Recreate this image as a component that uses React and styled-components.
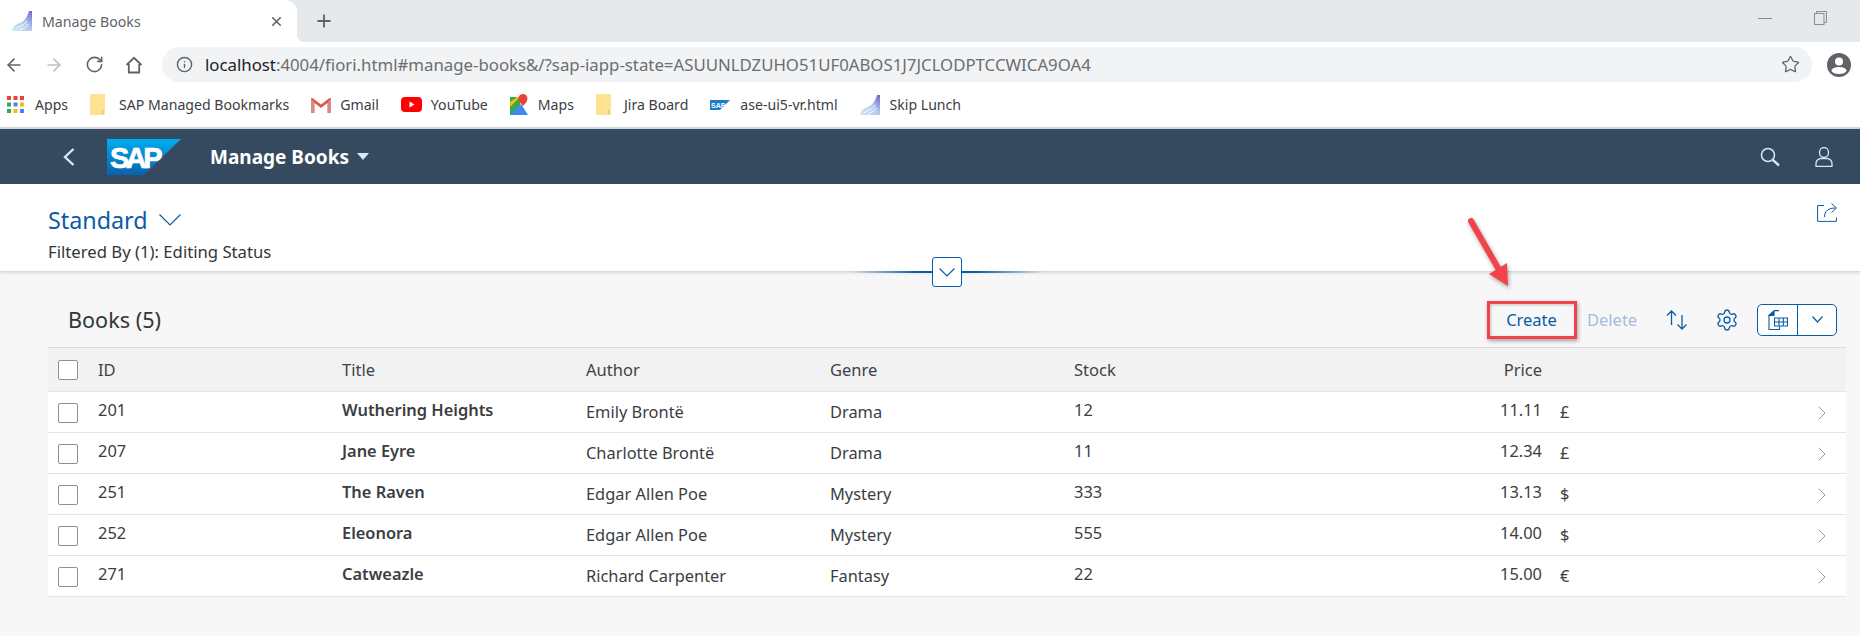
import React from "react";
import styled, { createGlobalStyle } from "styled-components";
import { Settings, ChevronRight, X, Plus, ArrowLeft, ArrowRight, RotateCw, Info, Star } from "lucide-react";

const Global = createGlobalStyle`
  html, body { margin: 0; padding: 0; background: #f7f7f7; }
  * { box-sizing: border-box; }
  body { font-family: "Noto Sans", "Open Sans", sans-serif; color: #32363a; }
`;

const Page = styled.div`
  position: relative;
  width: 1860px;
  height: 636px;
  overflow: hidden;
  background: #f7f7f7;
`;

/* ---------- browser chrome ---------- */
const TabStrip = styled.div`
  display: flex;
  align-items: center;
  height: 42px;
  background: #e6e9ec;
`;
const Tab = styled.div`
  position: relative;
  display: flex;
  align-items: center;
  width: 297px;
  height: 42px;
  padding: 0 13px 0 12px;
  background: #fff;
  border-top-right-radius: 12px;
  &::after {
    content: "";
    position: absolute;
    right: -8px;
    bottom: 0;
    width: 8px;
    height: 8px;
    background: radial-gradient(circle at 100% 0, transparent 8px, #fff 8.5px);
  }
`;
const TabTitle = styled.span`
  flex: 1;
  margin-left: 10px;
  font-size: 14.2px;
  color: #5f6368;
`;
const NewTab = styled.div`
  display: flex;
  margin-left: 17px;
  color: #5f6368;
`;
const WindowControls = styled.div`
  display: flex;
  align-items: center;
  gap: 42px;
  margin-left: auto;
  padding: 0 33px 6px 0;
`;
const Minimize = styled.div`
  width: 14px;
  height: 1px;
  background: #8a8d90;
`;
const Toolbar = styled.div`
  display: flex;
  align-items: center;
  height: 40px;
  padding: 5px 0 0 0;
  background: #fff;
`;
const NavButtons = styled.div`
  display: flex;
  align-items: center;
  gap: 12px;
  width: 162px;
  color: #5f6368;
`;
const NavCell = styled.div`
  display: flex;
  justify-content: center;
  width: 28px;
`;
const AddressBar = styled.div`
  display: flex;
  align-items: center;
  width: 1650px;
  height: 35px;
  padding: 0 12px 0 14px;
  border-radius: 18px;
  background: #f1f3f4;
`;
const Url = styled.div`
  flex: 1;
  margin-left: 12px;
  font-size: 16.8px;
  color: #6a6e72;
  white-space: nowrap;
`;
const Host = styled.span`
  color: #202124;
`;
const Avatar = styled.div`
  display: flex;
  margin-left: 15px;
`;
const Bookmarks = styled.div`
  display: flex;
  align-items: center;
  height: 45px;
  padding-left: 7px;
  background: #fff;
`;
const Bookmark = styled.div`
  display: flex;
  align-items: center;
  gap: ${(p) => p.$iconGap}px;
  margin-right: ${(p) => p.$gap}px;
  font-size: 14.1px;
  color: #3c4043;
  white-space: nowrap;
`;
const ChromeRule = styled.div`
  height: 2px;
  background: #d3d6d9;
`;

/* ---------- fiori shell ---------- */
const Shell = styled.header`
  display: flex;
  align-items: center;
  height: 55px;
  padding: 0 27px 0 63px;
  background: #354a5f;
  color: #fff;
`;
const BackButton = styled.div`
  display: flex;
  width: 44px;
  color: #d1e8ff;
`;
const ShellTitle = styled.div`
  display: flex;
  align-items: center;
  margin-left: 29px;
  font-size: 19px;
  font-weight: 700;
`;
const Caret = styled.span`
  width: 0;
  height: 0;
  margin-left: 8px;
  border-left: 6px solid transparent;
  border-right: 6px solid transparent;
  border-top: 7px solid #d1e8ff;
`;
const ShellIcons = styled.div`
  display: flex;
  align-items: center;
  gap: 35px;
  margin-left: auto;
  color: #d1e8ff;
`;

/* ---------- page header ---------- */
const PageHeader = styled.section`
  position: relative;
  display: flex;
  justify-content: space-between;
  height: 88px;
  padding: 21px 23px 0 48px;
  background: #fff;
  border-bottom: 1px solid #d9d9d9;
  box-shadow: 0 1px 3px rgba(0, 0, 0, 0.12);
`;
const VariantTitle = styled.div`
  display: flex;
  align-items: center;
  gap: 11px;
  height: 30px;
  font-size: 23.3px;
  color: #0a5ca8;
`;
const FilterText = styled.div`
  margin-top: 7px;
  font-size: 16.7px;
  line-height: 20px;
  color: #32363a;
`;
const ShareIcon = styled.div`
  display: flex;
  margin-top: -3px;
`;
const CollapseLine = styled.div`
  position: absolute;
  left: 850px;
  bottom: -2px;
  width: 194px;
  height: 2px;
  background: linear-gradient(90deg, rgba(10, 92, 168, 0), #0a5ca8 35%, #0a5ca8 65%, rgba(10, 92, 168, 0));
`;
const CollapseButton = styled.div`
  position: absolute;
  left: 932px;
  bottom: -16px;
  display: flex;
  align-items: center;
  justify-content: center;
  width: 30px;
  height: 30px;
  background: #fff;
  border: 1px solid #0a5ca8;
  border-radius: 3px;
  color: #0a5ca8;
`;

/* ---------- table ---------- */
const Content = styled.main`
  padding: 0 14px 0 48px;
`;
const TableToolbar = styled.div`
  display: flex;
  align-items: center;
  height: 75px;
  padding: 20px 9px 0 20px;
`;
const TableTitle = styled.h2`
  margin: 0;
  font-size: 21.6px;
  font-weight: 400;
  color: #32363a;
`;
const Actions = styled.div`
  display: flex;
  align-items: center;
  margin-left: auto;
`;
const TextAction = styled.div`
  width: ${(p) => p.$width}px;
  margin-right: ${(p) => p.$after}px;
  font-size: 16.5px;
  text-align: center;
  color: ${(p) => (p.$disabled ? "#a3bedb" : "#0a5ca8")};
`;
const IconAction = styled.div`
  display: flex;
  justify-content: center;
  width: 24px;
  margin-right: ${(p) => p.$after}px;
  color: #0a5ca8;
`;
const Split = styled.div`
  display: flex;
  width: 80px;
  height: 32px;
  background: #fff;
  border: 1px solid #0a5ca8;
  border-radius: 5px;
  color: #0a5ca8;
`;
const SplitPart = styled.div`
  display: flex;
  align-items: center;
  justify-content: center;
  width: ${(p) => p.$width}px;
  border-right: ${(p) => (p.$divided ? "1px solid #0a5ca8" : "none")};
`;
const columns = "50px 244px 244px 244px 244px 244px 224px 18px 238px 48px";
const HeaderRow = styled.div`
  display: grid;
  grid-template-columns: ${columns};
  align-items: center;
  height: 45px;
  background: #f2f2f2;
  border-top: 1px solid #d9d9d9;
  border-bottom: 1px solid #e5e5e5;
  font-size: 16.5px;
  color: #3f4347;
`;
const Row = styled.div`
  display: grid;
  grid-template-columns: ${columns};
  align-items: center;
  height: 41px;
  background: #fff;
  border-bottom: 1px solid #e5e5e5;
  font-size: 16.4px;
  color: #3a3e42;
`;
const Cell = styled.div`
  grid-column: ${(p) => p.$col};
  margin-bottom: ${(p) => (p.$low ? 2 : 6)}px;
  font-weight: ${(p) => (p.$bold ? 600 : 400)};
  text-align: ${(p) => (p.$right ? "right" : "left")};
  white-space: nowrap;
`;
const HeadCell = styled.div`
  grid-column: ${(p) => p.$col};
  text-align: ${(p) => (p.$right ? "right" : "left")};
`;
const CheckCell = styled.div`
  grid-column: 1;
  display: flex;
  padding-left: 10px;
  margin-top: ${(p) => (p.$head ? 0 : 1)}px;
`;
const Checkbox = styled.span`
  display: block;
  width: 20px;
  height: 20px;
  background: #fff;
  border: 1px solid #89919a;
  border-radius: 2px;
`;
const RowArrow = styled.div`
  grid-column: 10;
  display: flex;
  margin-top: 1px;
  padding-left: 12px;
  color: #8c8f92;
`;

/* ---------- annotation ---------- */
const Highlight = styled.div`
  position: absolute;
  left: 1487px;
  top: 301px;
  width: 90px;
  height: 38px;
  border: 3px solid #f2424a;
  box-shadow: 1px 2px 4px rgba(0, 0, 0, 0.35), inset 1px 1px 3px rgba(0, 0, 0, 0.2);
`;
const ArrowSvg = styled.svg`
  position: absolute;
  left: 1460px;
  top: 212px;
  filter: drop-shadow(1px 2px 2px rgba(0, 0, 0, 0.35));
`;

const Favicon = ({ id }) => (
  <svg width="20" height="20" viewBox="0 0 20 20">
    <defs>
      <linearGradient id={id} x1="0" y1="1" x2="1" y2="0">
        <stop offset="0" stopColor="#cdeef6" />
        <stop offset="0.55" stopColor="#b4c4ec" />
        <stop offset="1" stopColor="#6a66c4" />
      </linearGradient>
    </defs>
    <path d="M0 20c0-4 4-7 8-8 4-2 7-5 9-12h3v20z" fill={`url(#${id})`} />
    <path d="M4 18c3-3 8-3 11-8M8 19c3-2 6-2 8-6" stroke="#fff" strokeWidth="1" fill="none" />
  </svg>
);
const Folder = () => (
  <svg width="15" height="21" viewBox="0 0 15 21">
    <path d="M1 0h13a1 1 0 0 1 1 1v19a1 1 0 0 1-1 1H1a1 1 0 0 1-1-1V1a1 1 0 0 1 1-1z" fill="#fde293" />
    <path d="M12.500 16v4" stroke="#f0c04a" strokeWidth="1.500" />
  </svg>
);
const AppsIcon = () => (
  <svg width="17" height="17" viewBox="0 0 17 17">
    {["#ea4335", "#ea4335", "#ea4335", "#34a853", "#4285f4", "#fbbc05", "#34a853", "#fbbc05", "#4285f4"].map((c, i) => (
      <rect key={i} x={(i % 3) * 6.5} y={Math.floor(i / 3) * 6.5} width="4" height="4" fill={c} />
    ))}
  </svg>
);
const GmailIcon = () => (
  <svg width="20" height="16" viewBox="0 0 20 16">
    <path d="M0 1v15h3.500V6L10 11l6.500-5v10H20V1h-1.500L10 7.500 1.500 1z" fill="#e0584c" />
    <path d="M3.500 6v10H0V1zM16.500 6v10H20V1z" fill="#c9c9c9" opacity="0.45" />
  </svg>
);
const YouTubeIcon = () => (
  <svg width="21" height="15" viewBox="0 0 21 15">
    <rect width="21" height="15" rx="4" fill="#f00" />
    <path d="M8.500 4.500v6l5-3z" fill="#fff" />
  </svg>
);
const MapsIcon = () => (
  <svg width="18" height="21" viewBox="0 0 18 21">
    <path d="M0 3h10v18H0z" fill="#34a853" />
    <path d="M0 21l11-11 7 11z" fill="#4285f4" />
    <path d="M0 8L7 3h3L0 13z" fill="#fbbc05" />
    <path d="M13 0a4.500 4.500 0 0 1 4.500 4.500C17.500 8 13 12 13 12S8.500 8 8.500 4.500A4.500 4.500 0 0 1 13 0z" fill="#ea4335" />
  </svg>
);
const SapSmall = () => (
  <svg width="20" height="10" viewBox="0 0 20 10">
    <path d="M0 0h20L10 10H0z" fill="#1b7cc8" />
    <text x="1" y="7.500" fontSize="7" fontWeight="700" fontFamily="Liberation Sans" fill="#fff">SAP</text>
  </svg>
);
const SapLogo = () => (
  <svg width="74" height="36" viewBox="0 0 74 36">
    <defs>
      <linearGradient id="sap" x1="0" y1="0" x2="0" y2="1">
        <stop offset="0" stopColor="#00aeef" />
        <stop offset="1" stopColor="#0b60ac" />
      </linearGradient>
    </defs>
    <path d="M0 0h74L37 36H0z" fill="url(#sap)" />
    <text x="3" y="29" fontSize="29" fontWeight="700" fontFamily="Liberation Sans" letterSpacing="-3.500" stroke="#fff" strokeWidth="0.7" fill="#fff">SAP</text>
  </svg>
);
const BackGlyph = () => (
  <svg width="12" height="18" viewBox="0 0 12 18" fill="none" stroke="currentColor" strokeWidth="2.400">
    <path d="M10.500 1L2 9l8.500 8" />
  </svg>
);
const SearchGlyph = () => (
  <svg width="20" height="20" viewBox="0 0 20 20" fill="none" stroke="currentColor">
    <circle cx="8" cy="8" r="6.500" strokeWidth="1.500" />
    <path d="M12.800 12.800L19 18.500" strokeWidth="2.400" />
  </svg>
);
const UserIcon = () => (
  <svg width="18" height="20" viewBox="0 0 18 20" fill="none" stroke="currentColor" strokeWidth="1.300">
    <ellipse cx="9" cy="5.500" rx="4.500" ry="5" />
    <path d="M1 19.500v-3a5 5 0 0 1 5-5h6a5 5 0 0 1 5 5v3z" />
  </svg>
);
const HomeIcon = () => (
  <svg width="18" height="18" viewBox="0 0 18 18" fill="none" stroke="#5f6368" strokeWidth="1.800">
    <path d="M1.500 9L9 1.800 16.500 9M3.800 8v8.500h10.400V8" />
  </svg>
);
const ProfileIcon = () => (
  <svg width="24" height="24" viewBox="0 0 24 24">
    <circle cx="12" cy="12" r="12" fill="#5f6368" />
    <circle cx="12" cy="8.500" r="4" fill="#fff" />
    <ellipse cx="12" cy="17.500" rx="7.500" ry="3.500" fill="#fff" />
  </svg>
);
const RestoreIcon = () => (
  <svg width="13" height="14" viewBox="0 0 13 14" fill="none" stroke="#8a8d90">
    <rect x="0.500" y="2.500" width="9.500" height="11" />
    <path d="M2.500 2.500V.500h10v11H10" />
  </svg>
);
const DownChevron = ({ w, h }) => (
  <svg width={w} height={h} viewBox={`0 0 ${w} ${h}`} fill="none" stroke="currentColor" strokeWidth="1.200">
    <path d={`M.5 .5L${w / 2} ${h - 1}L${w - 0.5} .5`} />
  </svg>
);
const ShareGlyph = () => (
  <svg width="20" height="20" viewBox="0 0 20 20" fill="none" stroke="#0a5ca8" strokeWidth="1">
    <path d="M7 3.500H.6v15.900h18.800v-4" />
    <path d="M7.500 15c0-6 4-9 11-9M14.500 1.500l5 4.500-5 4.500" />
  </svg>
);
const SortGlyph = () => (
  <svg width="22" height="20" viewBox="0 0 22 20" fill="none" stroke="currentColor" strokeWidth="1.300">
    <path d="M5.500 15V1M1 5.500L5.500 1 10 5.500" />
    <path d="M16 5v14M11.500 14.500L16 19l4.500-4.500" />
  </svg>
);
const ExcelGlyph = () => (
  <svg width="20" height="20" viewBox="0 0 20 20" fill="none" stroke="currentColor" strokeWidth="1.100">
    <path d="M6 .6h5M6 1L1 5.500v14h10.500v-3" />
    <path d="M6 1v4.500H1z" fill="currentColor" />
    <path d="M6.500 8h13v8h-13zM6.500 12h13M11 8v8M15.300 8v8" />
  </svg>
);

const marks = [
  { icon: <AppsIcon />, label: "Apps", iconGap: 11 },
  { icon: <Folder />, label: "SAP Managed Bookmarks", iconGap: 14 },
  { icon: <GmailIcon />, label: "Gmail", iconGap: 9 },
  { icon: <YouTubeIcon />, label: "YouTube", iconGap: 9 },
  { icon: <MapsIcon />, label: "Maps", iconGap: 10 },
  { icon: <Folder />, label: "Jira Board", iconGap: 13 },
  { icon: <SapSmall />, label: "ase-ui5-vr.html", iconGap: 10 },
  { icon: <Favicon id="favB" />, label: "Skip Lunch", iconGap: 10 },
];

const books = [
  ["201", "Wuthering Heights", "Emily Brontë", "Drama", "12", "11.11", "£"],
  ["207", "Jane Eyre", "Charlotte Brontë", "Drama", "11", "12.34", "£"],
  ["251", "The Raven", "Edgar Allen Poe", "Mystery", "333", "13.13", "$"],
  ["252", "Eleonora", "Edgar Allen Poe", "Mystery", "555", "14.00", "$"],
  ["271", "Catweazle", "Richard Carpenter", "Fantasy", "22", "15.00", "€"],
];

export default function App() {
  return (
    <Page>
      <Global />
      <TabStrip>
        <Tab>
          <Favicon id="favA" />
          <TabTitle>Manage Books</TabTitle>
          <X size={15} color="#5f6368" strokeWidth={2.5} />
        </Tab>
        <NewTab>
          <Plus size={20} strokeWidth={2.2} />
        </NewTab>
        <WindowControls>
          <Minimize />
          <RestoreIcon />
        </WindowControls>
      </TabStrip>
      <Toolbar>
        <NavButtons>
          <NavCell><ArrowLeft size={20} strokeWidth={2} /></NavCell>
          <NavCell><ArrowRight size={20} strokeWidth={2} color="#bdc1c6" /></NavCell>
          <NavCell><RotateCw size={19} strokeWidth={2} /></NavCell>
          <NavCell><HomeIcon /></NavCell>
        </NavButtons>
        <AddressBar>
          <Info size={17} strokeWidth={2} color="#5f6368" />
          <Url>
            <Host>localhost</Host>:4004/fiori.html#manage-books&amp;/?sap-iapp-state=ASUUNLDZUHO51UF0ABOS1J7JCLODPTCCWICA9OA4
          </Url>
          <Star size={19} strokeWidth={1.6} color="#5f6368" />
        </AddressBar>
        <Avatar>
          <ProfileIcon />
        </Avatar>
      </Toolbar>
      <Bookmarks>
        {marks.map((m) => (
          <Bookmark key={m.label} $gap={22} $iconGap={m.iconGap}>
            {m.icon}
            {m.label}
          </Bookmark>
        ))}
      </Bookmarks>
      <ChromeRule />

      <Shell>
        <BackButton>
          <BackGlyph />
        </BackButton>
        <SapLogo />
        <ShellTitle>
          Manage Books
          <Caret />
        </ShellTitle>
        <ShellIcons>
          <SearchGlyph />
          <UserIcon />
        </ShellIcons>
      </Shell>

      <PageHeader>
        <div>
          <VariantTitle>
            Standard
            <DownChevron w={22} h={12} />
          </VariantTitle>
          <FilterText>Filtered By (1): Editing Status</FilterText>
        </div>
        <ShareIcon>
          <ShareGlyph />
        </ShareIcon>
        <CollapseLine />
        <CollapseButton>
          <DownChevron w={16} h={9} />
        </CollapseButton>
      </PageHeader>

      <Content>
        <TableToolbar>
          <TableTitle>Books (5)</TableTitle>
          <Actions>
            <TextAction $width={51} $after={30}>Create</TextAction>
            <TextAction $width={50} $after={28} $disabled>Delete</TextAction>
            <IconAction $after={26}>
              <SortGlyph />
            </IconAction>
            <IconAction $after={18}>
              <Settings size={24} strokeWidth={1.3} />
            </IconAction>
            <Split>
              <SplitPart $width={40} $divided>
                <ExcelGlyph />
              </SplitPart>
              <SplitPart $width={38}>
                <DownChevron w={11} h={7} />
              </SplitPart>
            </Split>
          </Actions>
        </TableToolbar>
        <HeaderRow>
          <CheckCell $head>
            <Checkbox />
          </CheckCell>
          <HeadCell $col={2}>ID</HeadCell>
          <HeadCell $col={3}>Title</HeadCell>
          <HeadCell $col={4}>Author</HeadCell>
          <HeadCell $col={5}>Genre</HeadCell>
          <HeadCell $col={6}>Stock</HeadCell>
          <HeadCell $col={7} $right>Price</HeadCell>
        </HeaderRow>
        {books.map((b) => (
          <Row key={b[0]}>
            <CheckCell>
              <Checkbox />
            </CheckCell>
            <Cell $col={2}>{b[0]}</Cell>
            <Cell $col={3} $bold>{b[1]}</Cell>
            <Cell $col={4} $low>{b[2]}</Cell>
            <Cell $col={5} $low>{b[3]}</Cell>
            <Cell $col={6}>{b[4]}</Cell>
            <Cell $col={7} $right>{b[5]}</Cell>
            <Cell $col={9} $low>{b[6]}</Cell>
            <RowArrow>
              <ChevronRight size={24} strokeWidth={0.9} />
            </RowArrow>
          </Row>
        ))}
      </Content>

      <Highlight />
      <ArrowSvg width="60" height="80" viewBox="0 0 60 80">
        <path d="M11 9L38 56" stroke="#f2424a" strokeWidth="6" strokeLinecap="round" fill="none" />
        <path d="M48 74L29 62 47 51z" fill="#f2424a" />
      </ArrowSvg>
    </Page>
  );
}
